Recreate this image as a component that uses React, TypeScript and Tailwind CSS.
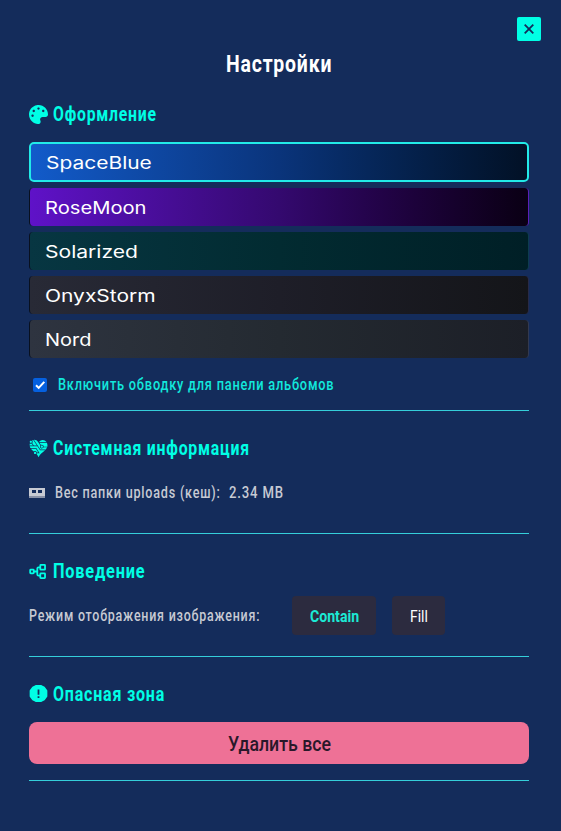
import { useLayoutEffect, useRef, useState, type ReactNode } from "react";
import { FaPalette } from "react-icons/fa";
import { GiTechnoHeart } from "react-icons/gi";
import { PiTreeStructureBold } from "react-icons/pi";

const NARROW = "font-['Roboto','Liberation_Sans',sans-serif]";
const WIDE = "font-['Inter','Liberation_Sans',sans-serif]";

// Condenses or widens a line of text so that it fills exactly `width` pixels.
function FitText({ width, className = "", children }: { width: number; className?: string; children: string }) {
  const ref = useRef<HTMLSpanElement>(null);
  const [scale, setScale] = useState(1);
  useLayoutEffect(() => {
    if (ref.current) setScale(width / ref.current.offsetWidth);
  }, [width]);
  return (
    <span className="flex shrink-0 items-center justify-start" style={{ width }}>
      <span
        ref={ref}
        className={`block shrink-0 origin-left whitespace-nowrap ${className}`}
        style={{ transform: `scaleX(${scale})` }}
      >
        {children}
      </span>
    </span>
  );
}

function Heading({ icon, width, children }: { icon: ReactNode; width: number; children: string }) {
  return (
    <h2 className="flex h-6 items-center gap-[5px] text-[#00ffe5]">
      <span className="flex w-[19px] shrink-0 items-center">{icon}</span>
      <FitText width={width} className="text-[20px] leading-6 font-bold tracking-[1px]">
        {children}
      </FitText>
    </h2>
  );
}

function MemoryIcon() {
  return (
    <svg viewBox="0 0 16 12" className="mr-[10px] h-3 w-4 shrink-0">
      <path fill="currentColor" fillRule="evenodd" d="M0 1h16v8H0zM3 3v3h4V3zM9 3v3h4V3z" />
      <path fill="currentColor" opacity=".65" d="M0 9h16v2H0z" />
    </svg>
  );
}

function AlertIcon() {
  return (
    <svg viewBox="0 0 20 20" className="size-5 shrink-0">
      <path
        fill="currentColor"
        stroke="currentColor"
        strokeWidth="1.5"
        strokeLinejoin="round"
        d="M6.8 1.8h5.4l3 1.7 2.4 3.3v5.4l-2.4 3.3-3 1.7H6.8l-3-1.7-2.4-3.3V6.8l2.4-3.3z"
      />
      <path fill="#142c5b" d="M8.6 5.4h1.8v5.4H8.6zM8.6 12.2h1.8V14H8.6z" />
    </svg>
  );
}

const themes = [
  { name: "RoseMoon", width: 102, bg: "from-[#5f12c8] via-[#34096f] to-[#0a0014] border-r-[#5a20b8]" },
  { name: "Solarized", width: 93, bg: "from-[#073642] via-[#022b31] to-[#001f26] border-r-[#0d3b4f]" },
  { name: "OnyxStorm", width: 111, bg: "from-[#282a36] via-[#1e1e28] to-[#141519] border-r-[#272a48]" },
  { name: "Nord", width: 47, bg: "from-[#2e3440] via-[#242a31] to-[#1c1f27] border-r-[#323950]" },
];

export default function App() {
  return (
    <main className={`flex h-[831px] w-[561px] flex-col overflow-hidden bg-[#142c5b] ${NARROW}`}>
      <div className="flex h-[41px] shrink-0 items-end justify-end pr-5">
        <button aria-label="Закрыть" className="flex size-6 items-center justify-center rounded-[2px] bg-[#00ffe5] text-[#142c5b]">
          <svg viewBox="0 0 10 10" className="size-[10px]" fill="none" stroke="currentColor" strokeWidth="1.8">
            <path d="M.7.7l8.6 8.6M9.3.7L.7 9.3" />
          </svg>
        </button>
      </div>

      <h1 className="mt-2 flex h-[30px] shrink-0 pl-[226px] text-white">
        <FitText width={106} className="text-[24px] leading-[30px] font-bold tracking-[1px]">Настройки</FitText>
      </h1>

      <div className="flex w-[529px] flex-col pl-[29px]">
        <section className="flex h-[332px] flex-col border-b border-[#35cfda] pt-[23px]">
          <Heading width={104} icon={<FaPalette size={19} className="shrink-0" />}>Оформление</Heading>
          <div className="mt-4 flex flex-col gap-[6px]">
            <div className="flex h-10 items-center rounded-[5px] border-2 border-[#22ebe8] bg-linear-to-r from-[#125bca] via-[#0a347b] to-[#021126] pt-[2px] pl-[15px] text-white">
              <FitText width={106} className={`text-[17px] leading-6 ${WIDE}`}>SpaceBlue</FitText>
            </div>
            {themes.map((t) => (
              <div
                key={t.name}
                className={`flex h-[38px] items-center rounded-[4px] border-x border-l-[#08101f] bg-linear-to-r pt-[2px] pl-[15px] text-white ${t.bg}`}
              >
                <FitText width={t.width} className={`text-[17px] leading-6 ${WIDE}`}>{t.name}</FitText>
              </div>
            ))}
          </div>
          <label className="mt-4 flex h-[22px] items-center pl-1 text-[#12e8dc]">
            <span className="mr-[11px] flex size-[14px] items-center justify-center rounded-[2px] bg-[#0560df]">
              <svg viewBox="0 0 14 14" className="size-[14px]" fill="none" stroke="white" strokeWidth="2">
                <path d="M3 7.2l2.7 2.7 5.6-6" />
              </svg>
            </span>
            <FitText width={276} className="text-[16px] leading-[22px] font-medium tracking-[1px]">
              Включить обводку для панели альбомов
            </FitText>
          </label>
        </section>

        <section className="flex h-[123px] flex-col border-b border-[#35cfda] pt-[25px]">
          <Heading width={197} icon={<GiTechnoHeart size={19} />}>Системная информация</Heading>
          <div className="mt-[21px] flex h-6 items-center text-[#c7cad3]">
            <MemoryIcon />
            <FitText width={166} className="text-[16px] leading-6 font-medium tracking-[1px]">Вес папки uploads (кеш):</FitText>
            <span className="w-2" />
            <FitText width={55} className="text-[16px] leading-6 font-medium tracking-[1px]">2.34 MB</FitText>
          </div>
        </section>

        <section className="flex h-[123px] flex-col border-b border-[#35cfda] pt-[25px]">
          <Heading width={92} icon={<PiTreeStructureBold size={19} />}>Поведение</Heading>
          <div className="mt-[13px] flex h-[39px] items-center text-[#c7cad3]">
            <FitText width={231} className="text-[16px] leading-6 font-medium tracking-[1px]">Режим отображения изображения:</FitText>
            <button className="ml-8 flex h-[39px] w-[84px] items-center justify-center rounded-[4px] bg-[#2c2b3f] text-[#1ce9d5]">
              <FitText width={49} className="text-[17px] leading-6 font-bold">Contain</FitText>
            </button>
            <button className="ml-4 flex h-[39px] w-[53px] items-center justify-center rounded-[4px] bg-[#2c2b3f] text-white">
              <FitText width={18} className="text-[17px] leading-6">Fill</FitText>
            </button>
          </div>
        </section>

        <section className="flex h-[124px] flex-col border-b border-[#35cfda] pt-[25px]">
          <Heading width={112} icon={<AlertIcon />}>Опасная зона</Heading>
          <button className="mt-4 flex h-[42px] items-center justify-center rounded-[8px] bg-[#ee7196] pt-[2px] text-[#29182a]">
            <FitText width={103} className="text-[21px] leading-7 font-medium">Удалить все</FitText>
          </button>
        </section>
      </div>
    </main>
  );
}
